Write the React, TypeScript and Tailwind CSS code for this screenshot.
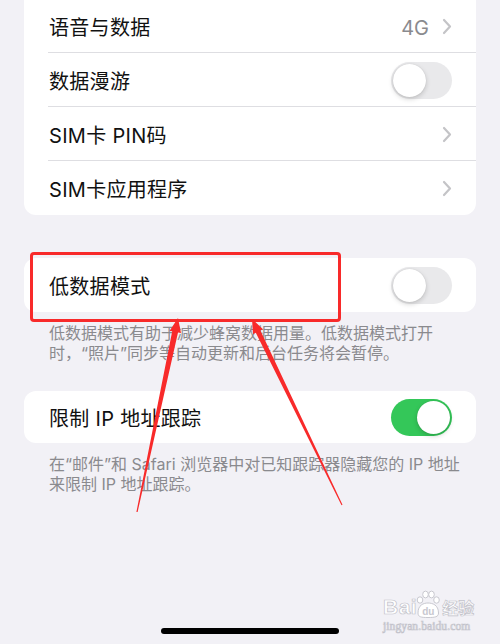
import React from 'react';

const font = { fontFamily: 'Inter, "Noto Sans CJK SC", sans-serif' };

const Chevron: React.FC = () => (
  <svg width="10" height="17" viewBox="0 0 10 17" className="shrink-0">
    <polyline points="2,2 8,8.5 2,15" fill="none" stroke="#c4c4c7" strokeWidth="2.2" strokeLinecap="round" strokeLinejoin="round" />
  </svg>
);

const Toggle: React.FC<{ on?: boolean }> = ({ on }) => (
  <div
    className={
      on
        ? 'w-[61px] h-[37px] rounded-full bg-[#34c759] p-[2px] flex justify-end shrink-0'
        : 'w-[61px] h-[37px] rounded-full bg-[#e9e9eb] p-[2px] flex justify-start shrink-0'
    }
  >
    <div className="w-[33px] h-[33px] rounded-full bg-white shadow-[0_2px_5px_rgba(0,0,0,0.18),0_0_1px_rgba(0,0,0,0.15)]" />
  </div>
);

const Row: React.FC<{ label: string; right?: React.ReactNode; divider?: boolean; h?: string }> = ({
  label,
  right,
  divider,
  h = 'h-[54px]',
}) => (
  <div className={`relative flex items-center justify-between pl-[25px] pr-[24px] ${h}`}>
    <span className="pt-[3px] text-[20px] text-[#111] tracking-[0.3px]">{label}</span>
    {right}
    {divider && <div className="absolute left-[24px] right-0 bottom-0 h-px bg-[#dedee2]" />}
  </div>
);

const App: React.FC = () => {
  return (
    <div className="relative w-[500px] h-[644px] bg-[#f2f1f6] overflow-hidden flex flex-col" style={font}>
      {/* cellular list */}
      <div className="mx-[24px] -mt-px bg-white rounded-b-[12px]">
        <Row
          label="语音与数据"
          divider
          right={
            <div className="flex items-center gap-[13px]">
              <span className="pt-[3px] text-[20px] text-[#8a8a8e]">4G</span>
              <Chevron />
            </div>
          }
        />
        <Row label="数据漫游" divider right={<Toggle />} />
        <Row label="SIM卡 PIN码" divider right={<Chevron />} />
        <Row label="SIM卡应用程序" right={<Chevron />} />
      </div>

      {/* low data mode */}
      <div className="mx-[24px] mt-[43px] bg-white rounded-[12px]">
        <Row label="低数据模式" right={<Toggle />} />
      </div>
      <p className="pl-[49px] pt-[11px] text-[16px] leading-[20px] text-[#8a8a8e]">
        低数据模式有助于减少蜂窝数据用量。低数据模式打开
        <br />
        时，“照片”同步等自动更新和后台任务将会暂停。
      </p>

      {/* ip tracking */}
      <div className="mx-[24px] mt-[28px] bg-white rounded-[12px]">
        <Row label="限制 IP 地址跟踪" h="h-[52px]" right={<Toggle on />} />
      </div>
      <p className="pl-[49px] pt-[11px] text-[16px] leading-[20px] text-[#8a8a8e]">
        在“邮件”和 Safari 浏览器中对已知跟踪器隐藏您的 IP 地址
        <br />
        来限制 IP 地址跟踪。
      </p>

      {/* home indicator */}
      <div className="mt-auto mb-[10px] mx-auto w-[178px] h-[6px] rounded-full bg-black" />

      {/* red annotations */}
      <div className="absolute left-[30px] top-[252px] w-[311px] h-[70px] border-[3px] border-[#f82a2a] rounded-[4px]" />
      <svg className="absolute inset-0 pointer-events-none" width="500" height="644" viewBox="0 0 500 644">
        <polygon
          fill="#f82a2a"
          points="178,318 181,333 178,332.5 137.6,512 136.4,512 172.2,331.2 169.5,331"
        />
        <polygon
          fill="#f82a2a"
          points="252,319 263,329.2 260.4,330.5 342.5,504.7 341.5,505.3 255.8,332.8 253,334.2"
        />
      </svg>

      {/* watermark */}
      <div className="absolute left-[383px] top-[589px] flex flex-col items-start text-white [-webkit-text-stroke:0.7px_#c2c2ca]">
        <div className="flex items-end h-[29px]">
          <span className="text-[21px] font-bold leading-[22px] tracking-[0.5px]" style={{ fontFamily: '"Liberation Sans", sans-serif' }}>
            Bai
          </span>
          <svg width="26" height="28" viewBox="0 0 26 28" className="-ml-[2px]">
            <g fill="white" stroke="#c2c2ca" strokeWidth="0.9">
              <ellipse cx="5" cy="10" rx="2.8" ry="3.2" />
              <ellipse cx="10.5" cy="4.5" rx="2.8" ry="3.4" />
              <ellipse cx="16.5" cy="4.5" rx="2.8" ry="3.4" />
              <ellipse cx="21.5" cy="10" rx="2.8" ry="3.2" />
              <path d="M3 23 C3 15 8.5 13 13 13 C17.5 13 23.5 15 23.5 23 C23.5 27 20 27.5 13 27.5 C6 27.5 3 27 3 23 Z" />
            </g>
            <text x="13.3" y="25" textAnchor="middle" fontSize="10" fontWeight="bold" fill="#c8c8d0" fontFamily="Liberation Sans, sans-serif">
              du
            </text>
          </svg>
          <span className="ml-[1px] text-[16px] font-bold leading-[21px]" style={{ fontFamily: '"Noto Sans CJK SC", sans-serif' }}>
            经验
          </span>
        </div>
        <span className="text-[11.5px] leading-[14px] mt-[1px] tracking-[0.1px]" style={{ fontFamily: '"Liberation Serif", serif' }}>
          jingyan.baidu.com
        </span>
      </div>
    </div>
  );
};

export default App;
